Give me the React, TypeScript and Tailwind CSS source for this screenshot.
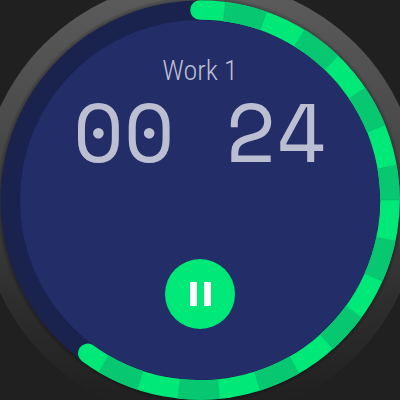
const BOUNDARIES = [0, 7.4, 19.5, 31.6, 43.7, 55.8, 67.9, 80, 90, 101.9, 114, 126.1, 138.2, 150.3, 162.4, 174.4, 186.3, 198.4, 210.4, 216.2];

function point(angle: number) {
  const a = (angle * Math.PI) / 180;
  return `${200 + 190 * Math.sin(a)} ${200 - 190 * Math.cos(a)}`;
}

function arc(from: number, to: number) {
  return `M ${point(from)} A 190 190 0 ${to - from > 180 ? 1 : 0} 1 ${point(to)}`;
}

function Dial() {
  return (
    <svg viewBox="0 0 400 400" className="absolute inset-0 h-full w-full" aria-hidden="true">
      <defs>
        <linearGradient id="bezel" x1="0" y1="0" x2="0" y2="400" gradientUnits="userSpaceOnUse">
          <stop offset="0" stopColor="#5a5a5a" />
          <stop offset="0.5" stopColor="#414141" />
          <stop offset="0.75" stopColor="#2e2e2e" />
          <stop offset="1" stopColor="#202020" />
        </linearGradient>
        <radialGradient id="shade" cx="200" cy="200" r="204" gradientUnits="userSpaceOnUse">
          <stop offset="0.975" stopColor="#000" stopOpacity="0.3" />
          <stop offset="1" stopColor="#000" stopOpacity="0" />
        </radialGradient>
      </defs>
      <circle cx="200" cy="200" r="220.5" fill="url(#bezel)" />
      <circle cx="200" cy="200" r="204" fill="url(#shade)" />
      <circle cx="200" cy="200" r="199.5" fill="#1a234e" />
      <circle cx="200" cy="200" r="180" fill="#232d68" />
      <path d={arc(0, 216.2)} fill="none" stroke="#00e878" strokeWidth="19.5" strokeLinecap="round" />
      {BOUNDARIES.slice(0, -1).map((start, i) =>
        i % 2 === 1 ? (
          <path key={start} d={arc(start, BOUNDARIES[i + 1])} fill="none" stroke="#07c771" strokeWidth="19.5" />
        ) : null,
      )}
      {BOUNDARIES.slice(1, -1).map((angle) => (
        <path
          key={angle}
          d="M 200 0.5 V 19.5"
          transform={`rotate(${angle} 200 200)`}
          stroke="#08a868"
          strokeOpacity="0.5"
          strokeWidth="0.6"
        />
      ))}
    </svg>
  );
}

export default function App() {
  return (
    <main className="flex min-h-screen items-center justify-center bg-[#202020]">
      <section className="relative flex aspect-square w-full max-w-screen-sm flex-col items-center overflow-hidden pt-14">
        <Dial />
        <h1 className="relative font-['Roboto_Condensed',Roboto,sans-serif] text-[28px] leading-[30px] font-light text-[#bcbed1]">
          Work 1
        </h1>
        <time className="relative mt-1 font-['Space_Mono','Liberation_Mono',monospace] text-[83px] leading-[82px] whitespace-pre text-[#bcbed1]">
          00 24
        </time>
        <button
          type="button"
          aria-label="Pause"
          className="relative mt-[87px] flex size-[70px] items-center justify-center gap-[7px] rounded-full bg-[#00e878]"
        >
          <span className="h-6 w-[7px] bg-white" />
          <span className="h-6 w-[7px] bg-white" />
        </button>
      </section>
    </main>
  );
}
